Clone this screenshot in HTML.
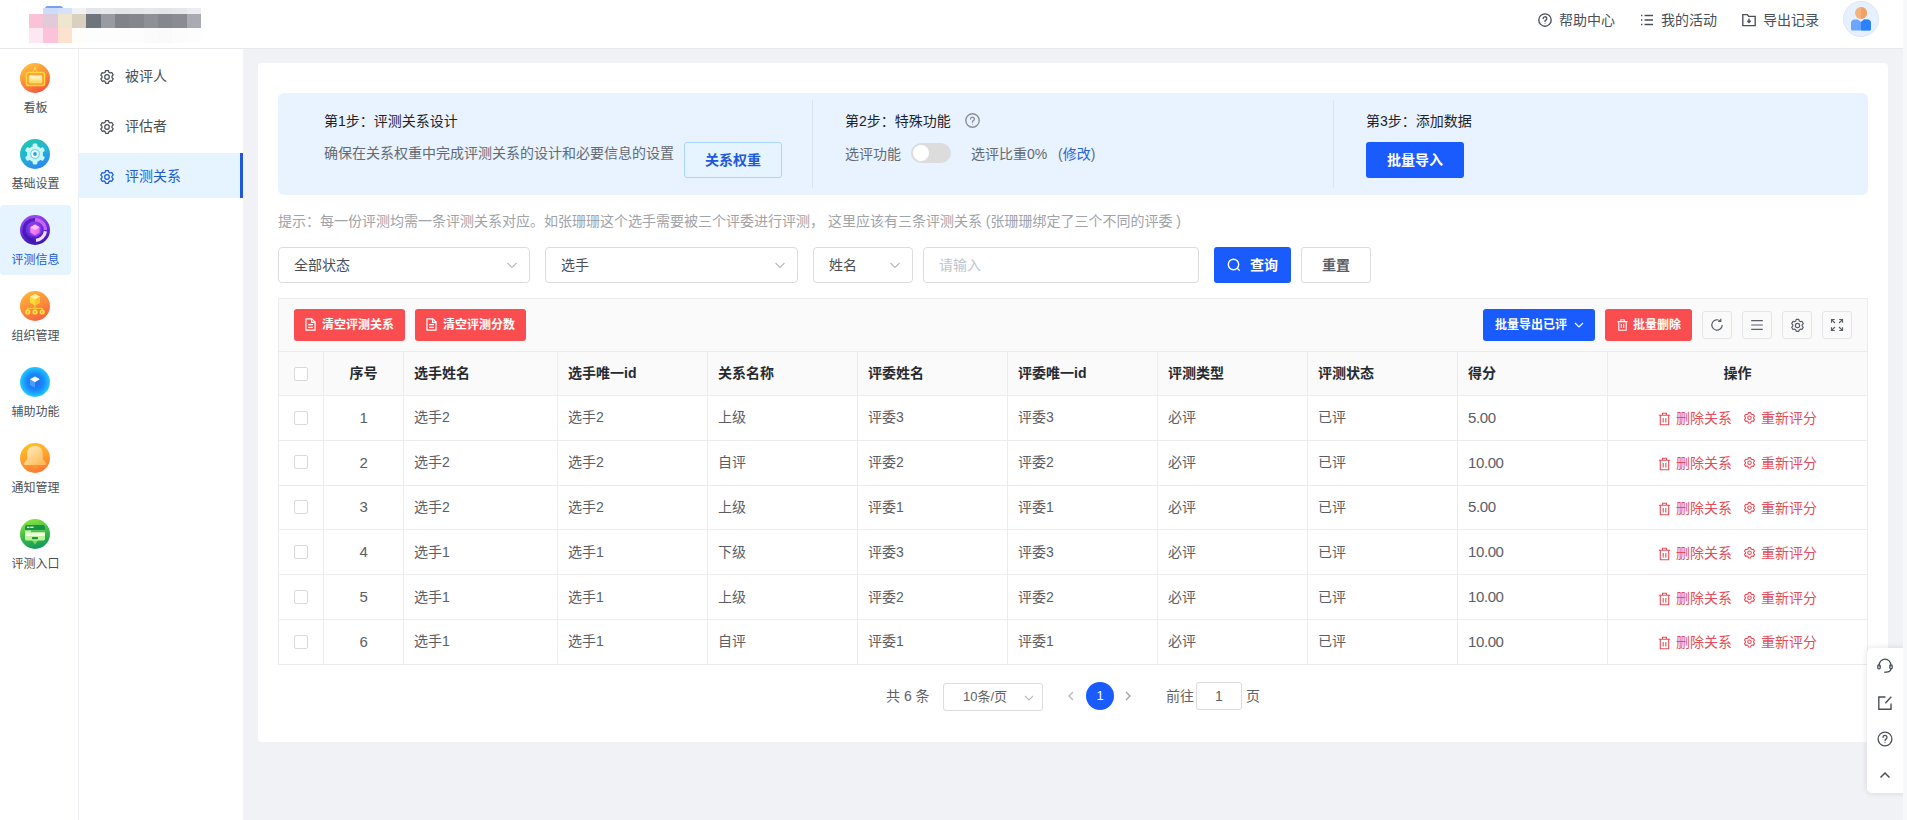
<!DOCTYPE html>
<html lang="zh-CN">
<head>
<meta charset="utf-8">
<title>评测关系</title>
<style>
*{box-sizing:border-box;margin:0;padding:0}
html,body{width:1907px;height:820px;overflow:hidden}
body{font-family:"Liberation Sans","Noto Sans CJK SC",sans-serif;font-size:14px;color:#333;background:#f0f2f5;position:relative}
.abs{position:absolute}
/* header */
#hdr{position:absolute;left:0;top:0;width:1903px;height:49px;background:#fff;border-bottom:1px solid #e6e8eb}
#rstrip{z-index:6;position:absolute;left:1903px;top:0;width:4px;height:820px;background:#f7f8fa}
.hitem{position:absolute;top:0;height:40px;line-height:40px;font-size:14px;color:#4a4f57;white-space:nowrap}
.hitem svg{position:absolute;top:13px;left:0}

#logo i{position:absolute;display:block}
#avatar{position:absolute;left:1843px;top:1px;width:36px;height:36px}
/* sidebar 1 */
#sb1{position:absolute;left:0;top:49px;width:79px;height:771px;background:#fff;border-right:1px solid #eff0f3}
.s1{position:absolute;left:0;width:71px;height:70px;border-radius:4px}
.s1 .ic{position:absolute;left:20px;top:10px;width:30px;height:30px;border-radius:50%}
.s1 .lb{position:absolute;left:0;width:71px;top:46px;text-align:center;font-size:12px;line-height:18px;color:#4a4f57;white-space:nowrap}
.s1.act{background:#e6f4ff}
.s1.act .lb{color:#1a5cd8}
/* sidebar 2 */
#sb2{position:absolute;left:79px;top:49px;width:164px;height:771px;background:#fff}
.s2{position:absolute;left:0;width:164px;height:45px;line-height:47px;font-size:14px;color:#4a4f57;padding-left:46px}
.s2 svg{position:absolute;left:20px;top:16px}
.s2.act{background:#e6f4ff;color:#1a5cd8;border-right:3px solid #1d59d8}

/* steps */
#steps{position:absolute;left:20px;top:30px;width:1590px;height:102px;background:#e8f3ff;border-radius:6px}
.st-t{position:absolute;font-size:14px;line-height:20px;color:#1f2329;white-space:nowrap}
.st-d{position:absolute;font-size:14px;line-height:20px;color:#646a73;white-space:nowrap}
.vline{position:absolute;top:7px;width:1px;height:88px;background:#dbe3ee}
.btn{position:absolute;height:36px;line-height:36px;border-radius:3px;text-align:center;font-size:14px;font-weight:bold;white-space:nowrap}
#tip{position:absolute;left:20px;top:148px;font-size:14px;line-height:20px;color:#a0a3a8;white-space:nowrap}
.sel{position:absolute;top:184px;height:36px;line-height:34px;border:1px solid #dcdcde;border-radius:4px;background:#fff;padding-left:15px;font-size:14px;color:#4a4f57}
.sel svg{position:absolute;right:11px;top:11px}

/* table */
#tbl{position:absolute;left:20px;top:235px;width:1590px}
#tbar{position:relative;height:53px;background:#fafafa;border:1px solid #ececec;border-bottom:none}
.rb{position:absolute;top:10px;height:32px;line-height:32px;border-radius:3px;color:#fff;font-size:12px;font-weight:bold;white-space:nowrap;background:#fa4d50}
.rb svg{position:absolute;top:10px}
.ib{position:absolute;top:12px;width:30px;height:28px;border:1px solid #e3e5e9;border-radius:3px;background:#fafafa}
.ib svg{position:absolute;left:7px;top:6px}
table{border-collapse:collapse;table-layout:fixed;width:1589px;font-size:14px}
th,td{border:1px solid #ececec;padding:0 0 0 10px;text-align:left;white-space:nowrap;overflow:hidden}
th{height:44px;background:#fafafa;color:#262a30;font-weight:bold;padding-bottom:4px}
td{height:44.8px;color:#5a5e66;padding-bottom:3px}
.c{text-align:center;padding-left:0}
.cb{position:relative;top:0;display:inline-block;width:14px;height:14px;border:1px solid #d9d9d9;border-radius:2px;background:#fff;vertical-align:middle}
.op{color:#e34d59;display:inline-block;position:relative;top:1px;padding-left:18px}
.op svg{position:absolute;left:0;top:4px}
th .cb{top:1px}
.n{font-size:15px;letter-spacing:-.4px;position:relative;top:1px}
/* pagination */
#pg{position:absolute;left:0;top:619px;width:1630px;height:28px;font-size:14px;color:#606266;line-height:28px}
#pg>*{position:absolute;top:0;white-space:nowrap}

#fp{z-index:5;position:absolute;left:1867px;top:648px;width:40px;height:145px;background:#fff;border-radius:5px 0 0 5px;box-shadow:0 0 6px rgba(0,0,0,.12)}
#fp svg{position:absolute;left:9px}
/* card */
#card{position:absolute;left:258px;top:63px;width:1630px;height:679px;background:#fff;border-radius:4px}
</style>
</head>
<body>
<div id="hdr"><div id="logo"><i style="left:45px;top:5.500px;width:18px;height:3px;border-radius:8px 8px 0 0;background:#7a9df6"></i><i style="left:29.0px;top:7.5px;width:14.5px;height:7.0px;background:#ffffff"></i><i style="left:43.3px;top:7.5px;width:14.5px;height:7.0px;background:#cddcfa"></i><i style="left:57.7px;top:7.5px;width:14.5px;height:7.0px;background:#d6e2fb"></i><i style="left:72.0px;top:7.5px;width:14.5px;height:7.0px;background:#f1f2f4"></i><i style="left:86.3px;top:7.5px;width:14.5px;height:7.0px;background:#e4e5e8"></i><i style="left:100.7px;top:7.5px;width:14.5px;height:7.0px;background:#e6e7e9"></i><i style="left:115.0px;top:7.5px;width:14.5px;height:7.0px;background:#e3e4e7"></i><i style="left:129.3px;top:7.5px;width:14.5px;height:7.0px;background:#e4e5e8"></i><i style="left:143.6px;top:7.5px;width:14.5px;height:7.0px;background:#e6e7e9"></i><i style="left:158.0px;top:7.5px;width:14.5px;height:7.0px;background:#e4e5e8"></i><i style="left:172.3px;top:7.5px;width:14.5px;height:7.0px;background:#e6e7e9"></i><i style="left:186.6px;top:7.5px;width:14.5px;height:7.0px;background:#ececee"></i><i style="left:29.0px;top:14.3px;width:14.5px;height:14.3px;background:#f9c2d6"></i><i style="left:43.3px;top:14.3px;width:14.5px;height:14.3px;background:#e2cbd9"></i><i style="left:57.7px;top:14.3px;width:14.5px;height:14.3px;background:#efe6cf"></i><i style="left:72.0px;top:14.3px;width:14.5px;height:14.3px;background:#dad0bf"></i><i style="left:86.3px;top:14.3px;width:14.5px;height:14.3px;background:#70747d"></i><i style="left:100.7px;top:14.3px;width:14.5px;height:14.3px;background:#989ca1"></i><i style="left:115.0px;top:14.3px;width:14.5px;height:14.3px;background:#808489"></i><i style="left:129.3px;top:14.3px;width:14.5px;height:14.3px;background:#83878b"></i><i style="left:143.6px;top:14.3px;width:14.5px;height:14.3px;background:#8d9195"></i><i style="left:158.0px;top:14.3px;width:14.5px;height:14.3px;background:#84888c"></i><i style="left:172.3px;top:14.3px;width:14.5px;height:14.3px;background:#898d91"></i><i style="left:186.6px;top:14.3px;width:14.5px;height:14.3px;background:#a9aab2"></i><i style="left:29.0px;top:28.4px;width:14.5px;height:14.2px;background:#fde7f0"></i><i style="left:43.3px;top:28.4px;width:14.5px;height:14.2px;background:#fdc1d9"></i><i style="left:57.7px;top:28.4px;width:14.5px;height:14.2px;background:#ffe1d0"></i><i style="left:72.0px;top:28.4px;width:14.5px;height:14.2px;background:#fffdf9"></i><i style="left:86.3px;top:28.4px;width:14.5px;height:14.2px;background:#fcfdfd"></i><i style="left:100.7px;top:28.4px;width:14.5px;height:14.2px;background:#fdfdfd"></i><i style="left:115.0px;top:28.4px;width:14.5px;height:14.2px;background:#fdfdfd"></i><i style="left:129.3px;top:28.4px;width:14.5px;height:14.2px;background:#fdfdfd"></i><i style="left:143.6px;top:28.4px;width:14.5px;height:14.2px;background:#fbfbfb"></i><i style="left:158.0px;top:28.4px;width:14.5px;height:14.2px;background:#fafafa"></i><i style="left:172.3px;top:28.4px;width:14.5px;height:14.2px;background:#fcfcfc"></i><i style="left:186.6px;top:28.4px;width:14.5px;height:14.2px;background:#fdfdfd"></i></div>
<div class="hitem" style="left:1538px;padding-left:21px"><svg width="14" height="14" viewBox="0 0 14 14" fill="none" stroke="#4a4f57" stroke-width="1.35"><circle cx="7" cy="7" r="6.2"/><path d="M5.2 5.6a1.8 1.8 0 1 1 2.6 1.6c-.5.3-.8.6-.8 1.2" stroke-linecap="round"/><circle cx="7" cy="10.2" r=".5" fill="#4a4f57" stroke="none"/></svg>帮助中心</div>
<div class="hitem" style="left:1640px;padding-left:21px"><svg width="14" height="14" viewBox="0 0 14 14" fill="none" stroke="#4a4f57" stroke-width="1.35"><path d="M4.5 2.5h8.5M4.5 7h8.5M4.5 11.5h8.5"/><path d="M1 2.5h1.4M1 7h1.4M1 11.5h1.4"/></svg>我的活动</div>
<div class="hitem" style="left:1742px;padding-left:21px"><svg width="14" height="14" viewBox="0 0 14 14" fill="none" stroke="#4a4f57" stroke-width="1.35"><path d="M.8 12.6V1.6h4.6l1.2 1.8h6.6v9.2z"/><path d="M7 5.6v3.6M5.3 7.8L7 9.6l1.7-1.8" /></svg>导出记录</div>
<div id="avatar"><svg width="36" height="36" viewBox="0 0 36 36"><circle cx="18" cy="18" r="17.5" fill="#e6f0ff" stroke="#dfe6f2" stroke-width="1"/><circle cx="18" cy="12" r="6" fill="#f5b27c"/><path d="M18 6a6 6 0 0 1 0 12z" fill="#f0a265"/><path d="M8 28v-5.5a4 4 0 0 1 4-4h3l3 2.5 3-2.5h3a4 4 0 0 1 4 4V28a1.5 1.5 0 0 1-1.5 1.5h-17A1.5 1.5 0 0 1 8 28z" fill="#6aa5ff"/><path d="M18 21l3-2.5h3a4 4 0 0 1 4 4V28a1.5 1.5 0 0 1-1.5 1.5H18z" fill="#2a82ff"/></svg></div>
</div>
<div id="fp">
<svg style="top:10px" width="18" height="16" viewBox="0 0 18 16" fill="none" stroke="#4a4f57" stroke-width="1.300"><path d="M3.200 8.500V7A5.800 5.800 0 0 1 14.800 7v1.500"/><rect x="1.800" y="6.800" width="2.400" height="4" rx="1"/><rect x="13.800" y="6.800" width="2.400" height="4" rx="1"/><path d="M14.800 10.800c0 2.400-2 3.400-4.800 3.400"/><path d="M8.200 14.200h2"/></svg>
<svg style="top:47px;left:10px" width="16" height="16" viewBox="0 0 16 16" fill="none" stroke="#4a4f57" stroke-width="1.400"><path d="M14 8.500v5.700H1.800V2H8.500"/><path d="M8.300 8.200l6-6.400" /></svg>
<svg style="top:83px;left:10px" width="16" height="16" viewBox="0 0 16 16" fill="none" stroke="#4a4f57" stroke-width="1.300"><circle cx="8" cy="8" r="6.900"/><path d="M6 6.400a2 2 0 1 1 3 1.700c-.7.400-1 .8-1 1.400" stroke-linecap="round"/><circle cx="8" cy="11.600" r=".6" fill="#4a4f57" stroke="none"/></svg>
<svg style="top:122px;left:12px" width="12" height="10" viewBox="0 0 12 10" fill="none" stroke="#4a4f57" stroke-width="1.500"><path d="M1.500 7.500L6 3l4.500 4.500"/></svg>
</div><div id="rstrip"></div>
<div id="sb1"><div class="s1" style="top:4px"><div class="ic"><svg width="30" height="30" viewBox="0 0 30 30"><defs><linearGradient id="g1" x1="0.2" y1="0" x2="0.7" y2="1"><stop offset="0" stop-color="#ffc43d"/><stop offset=".55" stop-color="#fb8a3a"/><stop offset="1" stop-color="#f2553c"/></linearGradient><linearGradient id="g1b" x1="0" y1="0" x2="0" y2="1"><stop offset="0" stop-color="#fffbe0"/><stop offset="1" stop-color="#ffd84a"/></linearGradient></defs><circle cx="15" cy="15" r="15" fill="url(#g1)"/><path d="M12.600 9.400L15 5.400l2.400 4" fill="none" stroke="#ffd23c" stroke-width="1"/><circle cx="15" cy="5.200" r=".9" fill="#ffe27a"/><rect x="6.400" y="9.600" width="18.200" height="13" rx="2.200" fill="#ff9a2e" stroke="#ffd83e" stroke-width="1.500"/><rect x="9.200" y="12.400" width="12.600" height="7.400" rx=".8" fill="url(#g1b)" stroke="#ffe884" stroke-width=".8"/></svg></div><div class="lb">看板</div></div><div class="s1" style="top:80px"><div class="ic"><svg width="30" height="30" viewBox="0 0 30 30"><defs><linearGradient id="g2" x1="0.2" y1="0" x2="0.6" y2="1"><stop offset="0" stop-color="#22c6a8"/><stop offset=".5" stop-color="#22b4d8"/><stop offset="1" stop-color="#2a86f2"/></linearGradient></defs><circle cx="15" cy="15" r="15" fill="url(#g2)"/><g fill="#c8f6f4"><circle cx="15" cy="15" r="8"/><g><rect x="12.6" y="4.6" width="4.8" height="5" rx="1.4"/><rect x="12.6" y="20.4" width="4.8" height="5" rx="1.4"/></g><g transform="rotate(60 15 15)"><rect x="12.6" y="4.6" width="4.8" height="5" rx="1.4"/><rect x="12.6" y="20.4" width="4.8" height="5" rx="1.4"/></g><g transform="rotate(120 15 15)"><rect x="12.6" y="4.6" width="4.8" height="5" rx="1.4"/><rect x="12.6" y="20.4" width="4.8" height="5" rx="1.4"/></g></g><circle cx="15" cy="15" r="4.3" fill="#fff"/><circle cx="15" cy="15" r="4.3" fill="none" stroke="#6fd6e6" stroke-width="1.2"/><circle cx="15" cy="15" r="1.9" fill="#2aa0e0"/></svg></div><div class="lb">基础设置</div></div><div class="s1 act" style="top:156px"><div class="ic"><svg width="30" height="30" viewBox="0 0 30 30"><defs><linearGradient id="g3" x1="0.3" y1="0" x2="0.6" y2="1"><stop offset="0" stop-color="#a24cf6"/><stop offset=".5" stop-color="#6a2ce0"/><stop offset="1" stop-color="#3a16b0"/></linearGradient><linearGradient id="g3b" x1="0" y1="0" x2="1" y2="1"><stop offset="0" stop-color="#ff9cf0"/><stop offset="1" stop-color="#e060f0"/></linearGradient></defs><circle cx="15" cy="15" r="15" fill="url(#g3)"/><path d="M15 4.6A10.4 10.4 0 0 1 25.4 15" fill="none" stroke="#d86cf4" stroke-width="3.2" opacity=".85"/><path d="M25.4 16.2A10.4 10.4 0 0 1 16 25.4" fill="none" stroke="#f4dcff" stroke-width="3.2"/><path d="M14 25.4A10.4 10.4 0 0 1 15 4.6" fill="none" stroke="#3a12a8" stroke-width="3.2" opacity=".7"/><circle cx="15" cy="15" r="6.6" fill="#8a3ce8"/><path d="M15 9.6l4.6 2.6v5.4L15 20.4l-4.6-2.8v-5.4z" fill="url(#g3b)"/><path d="M15 9.6l4.6 2.6L15 15l-4.6-2.8z" fill="#ffc0f8"/></svg></div><div class="lb">评测信息</div></div><div class="s1" style="top:232px"><div class="ic"><svg width="30" height="30" viewBox="0 0 30 30"><defs><linearGradient id="g4" x1="0.2" y1="0" x2="0.7" y2="1"><stop offset="0" stop-color="#ffb63a"/><stop offset=".55" stop-color="#fb8a3c"/><stop offset="1" stop-color="#f4603e"/></linearGradient></defs><circle cx="15" cy="15" r="15" fill="url(#g4)"/><path d="M15 3l5 2.8v6L15 14.6l-5-2.8v-6z" fill="#ffd83a"/><path d="M15 3l5 2.8L15 8.6 10 5.8z" fill="#fff2a0"/><path d="M15 8.6v6l5-2.8v-6z" fill="#ffc22a"/><path d="M15 14v3.4M7.6 20v-2.6h14.8V20" fill="none" stroke="#ffd23a" stroke-width="1"/><circle cx="7.8" cy="21" r="2.6" fill="#ffe24a"/><circle cx="15" cy="21" r="2.6" fill="#ffe24a"/><circle cx="22.2" cy="21" r="2.6" fill="#ffe24a"/><circle cx="7.8" cy="21" r="1.2" fill="#ffb22a"/><circle cx="15" cy="21" r="1.2" fill="#ffb22a"/><circle cx="22.2" cy="21" r="1.2" fill="#ffb22a"/></svg></div><div class="lb">组织管理</div></div><div class="s1" style="top:308px"><div class="ic"><svg width="30" height="30" viewBox="0 0 30 30"><defs><radialGradient id="g5" cx=".5" cy=".5" r=".5"><stop offset="0" stop-color="#1a6ef8"/><stop offset=".55" stop-color="#1a86fb"/><stop offset=".85" stop-color="#1cb4ff"/><stop offset="1" stop-color="#2ccaff"/></radialGradient></defs><circle cx="15" cy="15" r="15" fill="url(#g5)"/><path d="M15 9.600l5 2.700v5.600L15 20.800l-5-2.900v-5.600z" fill="#4a9cff"/><path d="M15 9.600l5 2.700L15 15.200l-5-2.900z" fill="#fff"/><path d="M15 15.200v5.600l5-2.900v-5.600z" fill="#2274f0"/></svg></div><div class="lb">辅助功能</div></div><div class="s1" style="top:384px"><div class="ic"><svg width="30" height="30" viewBox="0 0 30 30"><defs><linearGradient id="g6" x1="0.3" y1="0" x2="0.6" y2="1"><stop offset="0" stop-color="#ffc21e"/><stop offset=".5" stop-color="#ffa02c"/><stop offset="1" stop-color="#fb7838"/></linearGradient><linearGradient id="g6b" x1="0" y1="0" x2="1" y2="1"><stop offset="0" stop-color="#fff0c8"/><stop offset="1" stop-color="#ffb44a"/></linearGradient></defs><circle cx="15" cy="15" r="15" fill="url(#g6)"/><circle cx="15" cy="23" r="2.800" fill="#ff962a"/><path d="M15 2.800c5 0 7.800 3.600 7.800 8v5.600l3.200 3.600c.7.900.2 2-.9 2H4.900c-1.100 0-1.600-1.100-.9-2l3.200-3.600v-5.600c0-4.400 2.800-8 7.800-8z" fill="url(#g6b)"/></svg></div><div class="lb">通知管理</div></div><div class="s1" style="top:460px"><div class="ic"><svg width="30" height="30" viewBox="0 0 30 30"><defs><linearGradient id="g7" x1="0.3" y1="0" x2="0.6" y2="1"><stop offset="0" stop-color="#8ae63e"/><stop offset=".5" stop-color="#3cbc48"/><stop offset="1" stop-color="#12985a"/></linearGradient></defs><circle cx="15" cy="15" r="15" fill="url(#g7)"/><path d="M11.400 20.500h7.200L15 25.400z" fill="#7ad860"/><rect x="5" y="6" width="20" height="15.400" rx="1.600" fill="#bff29a"/><path d="M5 7.600a1.600 1.600 0 0 1 1.600-1.600h16.800a1.600 1.600 0 0 1 1.600 1.600v3.600H5z" fill="#1a9246"/><rect x="7" y="7.600" width="2.400" height="1.400" fill="#d8ffc0"/><rect x="10.200" y="7.600" width="3.400" height="1.400" fill="#d8ffc0"/><rect x="11" y="11.200" width="14" height="2" fill="#4cc050"/><rect x="5" y="13.800" width="20" height="3.200" fill="#f0ffe4"/><rect x="12" y="18" width="6" height="2.200" rx=".6" fill="#1a9246"/></svg></div><div class="lb">评测入口</div></div></div>
<div id="sb2"><div class="s2" style="top:4px"><svg width="16" height="16" viewBox="0 0 16 16" fill="none" stroke="currentColor" stroke-width="1.25" stroke-linejoin="round"><path d="M6.6 1.5h2.8l.5 1.7 1.2.7 1.7-.4 1.400 2.400-1.200 1.300v1.400l1.200 1.300-1.400 2.400-1.700-.4-1.200.7-.5 1.700H6.600l-.5-1.700-1.200-.7-1.700.4-1.400-2.400L3 8.700V7.300L1.800 6l1.400-2.400 1.700.4 1.200-.7z"/><circle cx="8" cy="8" r="2.3"/></svg>被评人</div><div class="s2" style="top:54px"><svg width="16" height="16" viewBox="0 0 16 16" fill="none" stroke="currentColor" stroke-width="1.25" stroke-linejoin="round"><path d="M6.6 1.5h2.8l.5 1.7 1.2.7 1.7-.4 1.400 2.400-1.200 1.300v1.400l1.200 1.300-1.400 2.400-1.700-.4-1.200.7-.5 1.700H6.600l-.5-1.700-1.200-.7-1.700.4-1.400-2.400L3 8.700V7.300L1.800 6l1.400-2.400 1.700.4 1.200-.7z"/><circle cx="8" cy="8" r="2.3"/></svg>评估者</div><div class="s2 act" style="top:104px"><svg width="16" height="16" viewBox="0 0 16 16" fill="none" stroke="currentColor" stroke-width="1.25" stroke-linejoin="round"><path d="M6.6 1.5h2.8l.5 1.7 1.2.7 1.7-.4 1.400 2.400-1.200 1.300v1.400l1.200 1.300-1.400 2.400-1.700-.4-1.200.7-.5 1.700H6.600l-.5-1.700-1.200-.7-1.700.4-1.400-2.400L3 8.700V7.300L1.800 6l1.400-2.400 1.700.4 1.200-.7z"/><circle cx="8" cy="8" r="2.3"/></svg>评测关系</div></div>
<div id="card">
<div id="steps">
<div class="st-t" style="left:46px;top:18px">第1步：评测关系设计</div>
<div class="st-d" style="left:46px;top:50px">确保在关系权重中完成评测关系的设计和必要信息的设置</div>
<div class="btn" style="left:406px;top:49px;width:98px;border:1px solid #a8d4ff;background:#e6f4ff;color:#1d59d8;line-height:34px">关系权重</div>
<div class="vline" style="left:534px"></div>
<div class="st-t" style="left:567px;top:18px">第2步：特殊功能</div>
<svg class="abs" style="left:687px;top:20px" width="15" height="15" viewBox="0 0 15 15" fill="none" stroke="#8a9099" stroke-width="1.4"><circle cx="7.5" cy="7.5" r="6.700"/><path d="M5.600 6a1.900 1.900 0 1 1 2.800 1.700c-.6.300-.9.700-.9 1.300" stroke-linecap="round"/><circle cx="7.500" cy="11" r=".55" fill="#8a9099" stroke="none"/></svg>
<div class="st-d" style="left:567px;top:51px">选评功能</div>
<div class="abs" style="left:633px;top:50px;width:40px;height:20px;border-radius:10px;background:#dcdcdc"><div class="abs" style="left:2px;top:2px;width:16px;height:16px;border-radius:8px;background:#fff"></div></div>
<div class="st-d" style="left:693px;top:51px">选评比重0%</div>
<div class="st-d" style="left:780px;top:51px">(<span style="color:#2a62d9">修改</span>)</div>
<div class="vline" style="left:1055px"></div>
<div class="st-t" style="left:1088px;top:18px">第3步：添加数据</div>
<div class="btn" style="left:1088px;top:49px;width:98px;background:#195bfd;color:#fff">批量导入</div>
</div>
<div id="tip">提示：每一份评测均需一条评测关系对应。如张珊珊这个选手需要被三个评委进行评测，&nbsp;这里应该有三条评测关系 (张珊珊绑定了三个不同的评委 )</div>
<div class="sel" style="left:20px;width:252px">全部状态<svg width="12" height="12" viewBox="0 0 12 12" fill="none" stroke="#b4b8bf" stroke-width="1.1"><path d="M1.5 4l4.5 4.500L10.500 4"/></svg></div>
<div class="sel" style="left:287px;width:253px">选手<svg width="12" height="12" viewBox="0 0 12 12" fill="none" stroke="#b4b8bf" stroke-width="1.1"><path d="M1.5 4l4.5 4.500L10.500 4"/></svg></div>
<div class="sel" style="left:555px;width:100px">姓名<svg width="12" height="12" viewBox="0 0 12 12" fill="none" stroke="#b4b8bf" stroke-width="1.1"><path d="M1.5 4l4.5 4.500L10.500 4"/></svg></div>
<div class="sel" style="left:665px;width:276px;color:#c0c4cc">请输入</div>
<div class="btn" style="left:956px;top:184px;width:77px;background:#195bfd;color:#fff;padding-left:23px"><svg class="abs" style="left:13px;top:11px" width="14" height="14" viewBox="0 0 14 14" fill="none" stroke="#fff" stroke-width="1.4"><circle cx="6.500" cy="6.500" r="5.200"/><path d="M10.300 10.300l2 2" stroke-linecap="round"/></svg>查询</div>
<div class="btn" style="left:1043px;top:184px;width:70px;background:#fff;border:1px solid #dcdcde;color:#5a5e66;line-height:34px">重置</div>
<div id="tbl"><div id="tbar">
<div class="rb" style="left:15px;width:111px;padding-left:28px"><svg style="left:11px;top:9px" width="11" height="13" viewBox="0 0 10 12" fill="none" stroke="#fff" stroke-width="1.1"><path d="M.8.8h5.400l3 3v7.400H.8z"/><path d="M6 .8v3.200h3.200M2.800 6.200h4.400M2.800 8.600h4.400"/></svg>清空评测关系</div>
<div class="rb" style="left:136px;width:111px;padding-left:28px"><svg style="left:11px;top:9px" width="11" height="13" viewBox="0 0 10 12" fill="none" stroke="#fff" stroke-width="1.1"><path d="M.8.8h5.400l3 3v7.400H.8z"/><path d="M6 .8v3.200h3.200M2.800 6.200h4.400M2.800 8.600h4.400"/></svg>清空评测分数</div>
<div class="rb" style="left:1204px;width:112px;padding-left:12px;background:#195bfd">批量导出已评<svg style="left:91px;top:11px" width="10" height="10" viewBox="0 0 10 10" fill="none" stroke="#fff" stroke-width="1.2"><path d="M1 3l4 4 4-4"/></svg></div>
<div class="rb" style="left:1326px;width:87px;padding-left:28px"><svg style="left:12px" width="11" height="12" viewBox="0 0 11 12" fill="none" stroke="#fff" stroke-width="1.1"><path d="M.5 2.600h10M3.800 2.600V.8h3.400v1.800M1.800 2.600v8.600h7.400V2.600M4.300 5v4M6.700 5v4"/></svg>批量删除</div>
<div class="ib" style="left:1423px"><svg width="14" height="14" viewBox="0 0 14 14" fill="none" stroke="#5a5e66" stroke-width="1.2"><path d="M12.200 7A5.200 5.200 0 1 1 10.500 3.100"/><path d="M10.800.8v2.600H8.200" stroke-linejoin="round"/></svg></div>
<div class="ib" style="left:1463px"><svg width="14" height="14" viewBox="0 0 14 14" fill="none" stroke="#5a5e66" stroke-width="1.2"><path d="M1.200 2.600h11.600M1.200 7h11.600M1.200 11.400h11.600"/></svg></div>
<div class="ib" style="left:1503px"><svg width="15" height="15" viewBox="0 0 16 16" fill="none" stroke="#5a5e66" stroke-width="1.250" stroke-linejoin="round"><path d="M6.600 1.500h2.800l.5 1.700 1.200.7 1.700-.4 1.400 2.400-1.200 1.300v1.400l1.200 1.300-1.400 2.400-1.700-.4-1.200.7-.5 1.700H6.600l-.5-1.700-1.200-.7-1.700.4-1.400-2.400L3 8.700V7.300L1.800 6l1.400-2.400 1.700.4 1.200-.7z"/><circle cx="8" cy="8" r="2.300"/></svg></div>
<div class="ib" style="left:1543px"><svg width="14" height="14" viewBox="0 0 14 14" fill="none" stroke="#5a5e66" stroke-width="1.200"><path d="M1.500 4.800V1.500h3.300M9.200 1.500h3.300v3.300M12.500 9.200v3.300H9.200M4.800 12.500H1.500V9.200M1.800 1.800l3.200 3.200M12.200 1.800L9 5M12.200 12.200L9 9M1.800 12.200L5 9"/></svg></div>
</div><table><colgroup><col style="width:45px"><col style="width:80px"><col style="width:154px"><col style="width:150px"><col style="width:150px"><col style="width:150px"><col style="width:150px"><col style="width:150px"><col style="width:150px"><col style="width:150px"><col style="width:260px"></colgroup><tr><th class="c"><span class="cb"></span></th><th class="c">序号</th><th>选手姓名</th><th>选手唯一id</th><th>关系名称</th><th>评委姓名</th><th>评委唯一id</th><th>评测类型</th><th>评测状态</th><th>得分</th><th class="c">操作</th></tr><tr><td class="c"><span class="cb"></span></td><td class="c"><span class="n">1</span></td><td>选手2</td><td>选手2</td><td>上级</td><td>评委3</td><td>评委3</td><td>必评</td><td>已评</td><td><span class="n">5.00</span></td><td class="c"><span class="op"><svg style="top:5px" width="13" height="14" viewBox="0 0 13 14" fill="none" stroke="#e34d59" stroke-width="1.1"><path d="M.8 3.200h11.400M4.500 3.200V1.200h4v2M2.300 3.200v9.600h8.400V3.200M5.200 6v4.400M7.800 6v4.400"/></svg>删除关系</span><span class="op" style="margin-left:11px"><svg width="13" height="14" viewBox="0 0 14 14" fill="none" stroke="#e34d59" stroke-width="1.15" stroke-linejoin="round"><path d="M5.800 1.200h2.400l.45 1.500 1.050.6 1.500-.35 1.200 2.100-1.050 1.150v1.200l1.050 1.150-1.200 2.100-1.500-.35-1.050.6-.45 1.500H5.800l-.45-1.500-1.050-.6-1.500.35-1.200-2.100L2.650 7.400V6.200L1.600 5.050l1.200-2.100 1.500.35 1.050-.6z"/><circle cx="7" cy="6.800" r="1.900"/></svg>重新评分</span></td></tr><tr><td class="c"><span class="cb"></span></td><td class="c"><span class="n">2</span></td><td>选手2</td><td>选手2</td><td>自评</td><td>评委2</td><td>评委2</td><td>必评</td><td>已评</td><td><span class="n">10.00</span></td><td class="c"><span class="op"><svg style="top:5px" width="13" height="14" viewBox="0 0 13 14" fill="none" stroke="#e34d59" stroke-width="1.1"><path d="M.8 3.200h11.400M4.500 3.200V1.200h4v2M2.300 3.200v9.600h8.400V3.200M5.200 6v4.400M7.800 6v4.400"/></svg>删除关系</span><span class="op" style="margin-left:11px"><svg width="13" height="14" viewBox="0 0 14 14" fill="none" stroke="#e34d59" stroke-width="1.15" stroke-linejoin="round"><path d="M5.800 1.200h2.400l.45 1.500 1.050.6 1.500-.35 1.200 2.100-1.050 1.150v1.200l1.050 1.150-1.200 2.100-1.500-.35-1.050.6-.45 1.500H5.800l-.45-1.500-1.050-.6-1.500.35-1.200-2.100L2.650 7.400V6.200L1.600 5.050l1.200-2.100 1.500.35 1.050-.6z"/><circle cx="7" cy="6.800" r="1.900"/></svg>重新评分</span></td></tr><tr><td class="c"><span class="cb"></span></td><td class="c"><span class="n">3</span></td><td>选手2</td><td>选手2</td><td>上级</td><td>评委1</td><td>评委1</td><td>必评</td><td>已评</td><td><span class="n">5.00</span></td><td class="c"><span class="op"><svg style="top:5px" width="13" height="14" viewBox="0 0 13 14" fill="none" stroke="#e34d59" stroke-width="1.1"><path d="M.8 3.200h11.400M4.500 3.200V1.200h4v2M2.300 3.200v9.600h8.400V3.200M5.200 6v4.400M7.800 6v4.400"/></svg>删除关系</span><span class="op" style="margin-left:11px"><svg width="13" height="14" viewBox="0 0 14 14" fill="none" stroke="#e34d59" stroke-width="1.15" stroke-linejoin="round"><path d="M5.800 1.200h2.400l.45 1.500 1.050.6 1.500-.35 1.200 2.100-1.050 1.150v1.200l1.050 1.150-1.200 2.100-1.500-.35-1.050.6-.45 1.500H5.800l-.45-1.500-1.050-.6-1.500.35-1.200-2.100L2.650 7.400V6.200L1.600 5.050l1.200-2.100 1.500.35 1.050-.6z"/><circle cx="7" cy="6.800" r="1.900"/></svg>重新评分</span></td></tr><tr><td class="c"><span class="cb"></span></td><td class="c"><span class="n">4</span></td><td>选手1</td><td>选手1</td><td>下级</td><td>评委3</td><td>评委3</td><td>必评</td><td>已评</td><td><span class="n">10.00</span></td><td class="c"><span class="op"><svg style="top:5px" width="13" height="14" viewBox="0 0 13 14" fill="none" stroke="#e34d59" stroke-width="1.1"><path d="M.8 3.200h11.400M4.500 3.200V1.200h4v2M2.300 3.200v9.600h8.400V3.200M5.200 6v4.400M7.800 6v4.400"/></svg>删除关系</span><span class="op" style="margin-left:11px"><svg width="13" height="14" viewBox="0 0 14 14" fill="none" stroke="#e34d59" stroke-width="1.15" stroke-linejoin="round"><path d="M5.800 1.200h2.400l.45 1.500 1.050.6 1.500-.35 1.200 2.100-1.050 1.150v1.200l1.050 1.150-1.200 2.100-1.500-.35-1.050.6-.45 1.500H5.800l-.45-1.500-1.050-.6-1.500.35-1.200-2.100L2.650 7.400V6.200L1.600 5.050l1.200-2.100 1.500.35 1.050-.6z"/><circle cx="7" cy="6.800" r="1.900"/></svg>重新评分</span></td></tr><tr><td class="c"><span class="cb"></span></td><td class="c"><span class="n">5</span></td><td>选手1</td><td>选手1</td><td>上级</td><td>评委2</td><td>评委2</td><td>必评</td><td>已评</td><td><span class="n">10.00</span></td><td class="c"><span class="op"><svg style="top:5px" width="13" height="14" viewBox="0 0 13 14" fill="none" stroke="#e34d59" stroke-width="1.1"><path d="M.8 3.200h11.400M4.500 3.200V1.200h4v2M2.300 3.200v9.600h8.400V3.200M5.200 6v4.400M7.800 6v4.400"/></svg>删除关系</span><span class="op" style="margin-left:11px"><svg width="13" height="14" viewBox="0 0 14 14" fill="none" stroke="#e34d59" stroke-width="1.15" stroke-linejoin="round"><path d="M5.800 1.200h2.400l.45 1.500 1.050.6 1.500-.35 1.200 2.100-1.050 1.150v1.200l1.050 1.150-1.200 2.100-1.500-.35-1.050.6-.45 1.500H5.800l-.45-1.500-1.050-.6-1.500.35-1.200-2.100L2.650 7.400V6.200L1.600 5.050l1.200-2.100 1.500.35 1.050-.6z"/><circle cx="7" cy="6.800" r="1.900"/></svg>重新评分</span></td></tr><tr><td class="c"><span class="cb"></span></td><td class="c"><span class="n">6</span></td><td>选手1</td><td>选手1</td><td>自评</td><td>评委1</td><td>评委1</td><td>必评</td><td>已评</td><td><span class="n">10.00</span></td><td class="c"><span class="op"><svg style="top:5px" width="13" height="14" viewBox="0 0 13 14" fill="none" stroke="#e34d59" stroke-width="1.1"><path d="M.8 3.200h11.400M4.500 3.200V1.200h4v2M2.300 3.200v9.600h8.400V3.200M5.200 6v4.400M7.800 6v4.400"/></svg>删除关系</span><span class="op" style="margin-left:11px"><svg width="13" height="14" viewBox="0 0 14 14" fill="none" stroke="#e34d59" stroke-width="1.15" stroke-linejoin="round"><path d="M5.800 1.200h2.400l.45 1.500 1.050.6 1.500-.35 1.200 2.100-1.050 1.150v1.200l1.050 1.150-1.200 2.100-1.500-.35-1.050.6-.45 1.500H5.800l-.45-1.500-1.050-.6-1.500.35-1.200-2.100L2.650 7.400V6.200L1.600 5.050l1.200-2.100 1.500.35 1.050-.6z"/><circle cx="7" cy="6.800" r="1.900"/></svg>重新评分</span></td></tr></table></div><div id="pg">
<span style="left:628px">共 6 条</span>
<div style="left:685px;top:1px;width:100px;height:28px;border:1px solid #dcdcde;border-radius:3px;font-size:13px;line-height:26px;padding-left:19px">10条/页<svg class="abs" style="right:8px;top:9px" width="10" height="10" viewBox="0 0 10 10" fill="none" stroke="#b4b8bf" stroke-width="1.1"><path d="M1 3l4 4 4-4"/></svg></div>
<svg style="left:809px;top:9px" width="8" height="10" viewBox="0 0 8 10" fill="none" stroke="#b4b8bf" stroke-width="1.3"><path d="M6 1L2 5l4 4"/></svg>
<div style="left:828px;width:28px;height:28px;border-radius:14px;background:#195bfd;color:#fff;text-align:center;font-size:13px">1</div>
<svg style="left:866px;top:9px" width="8" height="10" viewBox="0 0 8 10" fill="none" stroke="#9a9ea6" stroke-width="1.3"><path d="M2 1l4 4-4 4"/></svg>
<span style="left:908px">前往</span>
<div style="left:938px;width:46px;height:28px;border:1px solid #dcdcde;border-radius:3px;text-align:center;line-height:26px;font-size:14px">1</div>
<span style="left:988px">页</span>
</div>
</div>
</body>
</html>
